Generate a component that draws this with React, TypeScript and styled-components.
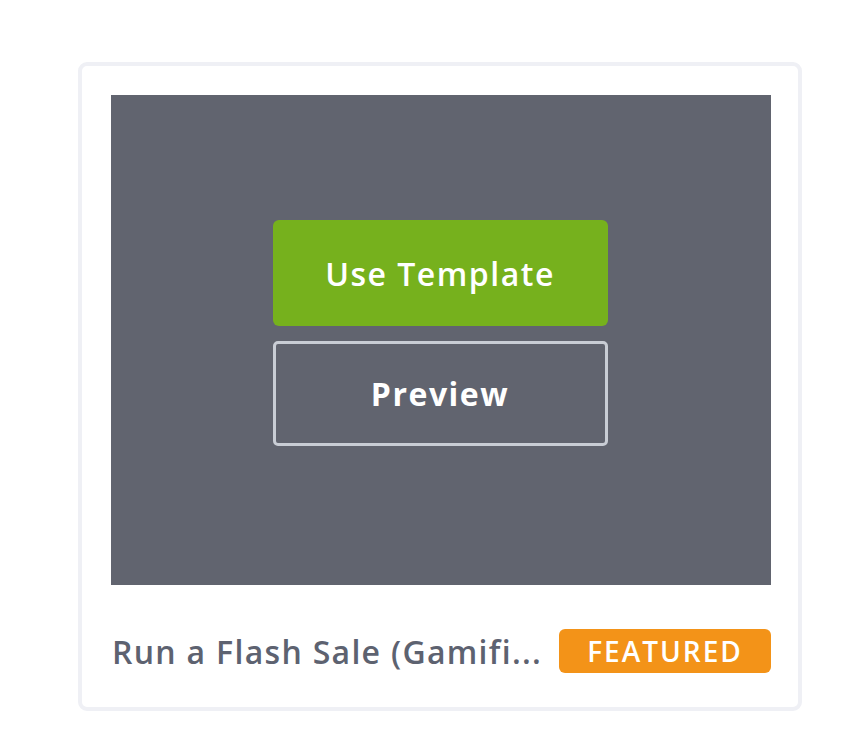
import React from "react";
import styled, { createGlobalStyle } from "styled-components";

const GlobalStyle = createGlobalStyle`
  html, body {
    margin: 0;
    padding: 0;
    background: #ffffff;
  }
  body {
    font-family: "Open Sans", "Lato", sans-serif;
    -webkit-font-smoothing: antialiased;
  }
`;

const Page = styled.div`
  padding: 62px 0 0 78px;
`;

const Card = styled.div`
  box-sizing: border-box;
  width: 724px;
  height: 649px;
  border: 4px solid #eff0f5;
  border-radius: 9px;
  background: #ffffff;
  padding: 29px 27px 0 29px;
  display: flex;
  flex-direction: column;
`;

const Thumb = styled.div`
  height: 490px;
  background: #61646f;
  display: flex;
  flex-direction: column;
  align-items: center;
  justify-content: center;
  gap: 15px;
  padding-bottom: 14px;
  padding-right: 2px;
  box-sizing: border-box;
`;

const ActionButton = styled.button<{ $variant: "primary" | "outline" }>`
  box-sizing: border-box;
  width: 335px;
  height: ${(p) => (p.$variant === "primary" ? "106px" : "105px")};
  border-radius: ${(p) => (p.$variant === "primary" ? "6px" : "5px")};
  border: ${(p) => (p.$variant === "primary" ? "none" : "3px solid #c9cdd5")};
  background: ${(p) => (p.$variant === "primary" ? "#76b11d" : "transparent")};
  color: #ffffff;
  font-family: "Open Sans", sans-serif;
  font-weight: ${(p) => (p.$variant === "primary" ? 600 : 700)};
  font-size: 32px;
  letter-spacing: 1.5px;
  cursor: pointer;
  padding: 0;
`;

const Footer = styled.div`
  display: flex;
  align-items: center;
  justify-content: space-between;
  gap: 14px;
  margin-top: 44px;
  padding-left: 1px;
`;

const Title = styled.div`
  flex: 1;
  min-width: 0;
  white-space: nowrap;
  overflow: hidden;
  text-overflow: ellipsis;
  color: #5d6270;
  font-size: 32px;
  font-weight: 600;
  letter-spacing: 1.3px;
`;

const Badge = styled.span`
  flex: none;
  box-sizing: border-box;
  width: 212px;
  height: 44px;
  border-radius: 6px;
  background: #f39318;
  color: #ffffff;
  font-size: 28px;
  font-weight: 600;
  letter-spacing: 2px;
  display: flex;
  align-items: center;
  justify-content: center;
  text-transform: uppercase;
`;

export default function App() {
  return (
    <>
      <GlobalStyle />
      <Page>
        <Card>
          <Thumb>
            <ActionButton $variant="primary">Use Template</ActionButton>
            <ActionButton $variant="outline">Preview</ActionButton>
          </Thumb>
          <Footer>
            <Title>Run a Flash Sale (Gamifi...</Title>
            <Badge>Featured</Badge>
          </Footer>
        </Card>
      </Page>
    </>
  );
}
